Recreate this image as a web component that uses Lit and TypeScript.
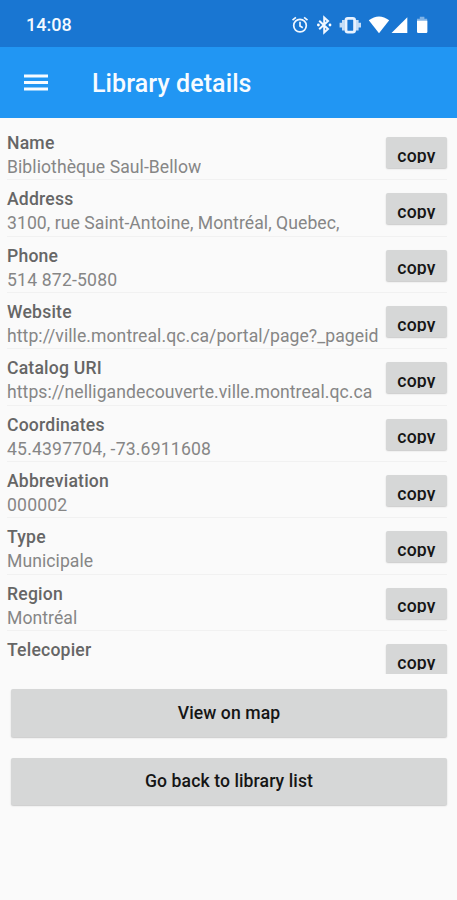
import { LitElement, html, css } from "lit";
import { customElement, property } from "lit/decorators.js";
import { classMap } from "lit/directives/class-map.js";

@customElement("status-bar")
class StatusBar extends LitElement {
  static styles = css`
    :host {
      display: flex;
      box-sizing: border-box;
      height: 47px;
      padding: 2px 0 0 26px;
      align-items: center;
      background: #1976d2;
      color: #f4f9ff;
    }
    .time {
      flex: 1;
      font-size: 18px;
      font-weight: 500;
    }
    svg {
      display: block;
      width: 167px;
      height: 24px;
      fill: #fff;
    }
    .line {
      fill: none;
      stroke: #f0f7ff;
    }
    .faint {
      opacity: 0.45;
    }
    .soft {
      opacity: 0.8;
    }
  `;
  render() {
    return html`<span class="time">14:08</span>
      <svg viewBox="290 12 167 24">
        <g class="line" stroke-width="1.7">
          <circle cx="300" cy="24.6" r="6.3" />
          <path d="M300 20.8v4.2l2.8 1.8M292.5 19.2l3.4-2.8M307.5 19.2l-3.4-2.8" />
        </g>
        <path class="line" stroke-width="2" d="M319.2 19.8l8.8 8.2-3.8 3.4V16.6l3.8 3.4-8.8 8.2" />
        <circle cx="318.4" cy="24" r="1.4" />
        <circle cx="330" cy="24" r="1.4" />
        <rect x="346" y="17.3" width="8.6" height="13.8" rx="1.8" fill="none" stroke="#e8f2ff" stroke-width="2.8" />
        <path class="line soft" stroke-width="2.8" d="M343.4 19v10.4M357.2 19v10.4M341 21.8v4.8M359.6 21.8v4.8" />
        <path d="M368.8 19.2q10.2-7.6 20.4 0L379 32.2z" />
        <path d="M407.3 16.2v15.8h-15.8z" />
        <path class="faint" d="M417 20v-2.2h2.8v-2h4.6v2h2.8V20z" />
        <path d="M417 19.8h10.4v11q0 1.2-1.2 1.2h-8q-1.2 0-1.2-1.2z" />
      </svg>`;
  }
}

@customElement("detail-row")
class DetailRow extends LitElement {
  @property() label = "";
  @property() value = "";
  static styles = css`
    :host {
      display: flex;
      flex: none;
      box-sizing: border-box;
      height: 56.35px;
      border-bottom: 1px solid #f1f1f1;
      justify-content: space-between;
      align-items: flex-start;
    }
    .text {
      padding-top: 9px;
      white-space: nowrap;
    }
    .label {
      font-size: 17.6px;
      line-height: 21px;
      font-weight: 500;
      letter-spacing: 0.2px;
      color: #666;
    }
    .value {
      margin-top: 3px;
      font-size: 17.6px;
      line-height: 21px;
      height: 19.5px;
      overflow: hidden;
      letter-spacing: 0.06px;
      color: #868686;
    }
    .value.numeric {
      letter-spacing: 0.18px;
    }
    .copy {
      box-sizing: border-box;
      width: 61px;
      height: 31px;
      margin: 13px 0 0;
      padding: 3px 0 0;
      border: 0;
      border-radius: 2px;
      background: #d6d7d7;
      box-shadow: 0 1px 1.5px #0003;
      color: #151515;
      font: 500 17.6px/21px Roboto, sans-serif;
      letter-spacing: 0.2px;
      text-align: center;
    }
    .clip {
      display: block;
      height: 17px;
      overflow: hidden;
    }
  `;
  render() {
    const numeric = /^[\d\s.,-]+$/.test(this.value);
    return html`<div class="text">
        <div class="label">${this.label}</div>
        <div class=${classMap({ value: true, numeric })}>${this.value}</div>
      </div>
      <button class="copy"><span class="clip">copy</span></button>`;
  }
}

const DETAILS = [
  ["Name", "Bibliothèque Saul-Bellow"],
  ["Address", "3100, rue Saint-Antoine, Montréal, Quebec,"],
  ["Phone", "514 872-5080"],
  ["Website", "http://ville.montreal.qc.ca/portal/page?_pageid"],
  ["Catalog URI", "https://nelligandecouverte.ville.montreal.qc.ca"],
  ["Coordinates", "45.4397704, -73.6911608"],
  ["Abbreviation", "000002"],
  ["Type", "Municipale"],
  ["Region", "Montréal"],
  ["Telecopier", ""],
];

@customElement("app-root")
class AppRoot extends LitElement {
  static styles = css`
    :host {
      display: flex;
      flex-direction: column;
      height: 900px;
      background: #fafafa;
      font-family: Roboto, sans-serif;
    }
    .bar {
      display: flex;
      align-items: center;
      box-sizing: border-box;
      height: 71px;
      padding-left: 24px;
      background: #2196f3;
      color: #f7fbff;
    }
    .bar svg {
      display: block;
      width: 24px;
      height: 18px;
      fill: #f7fbff;
    }
    .bar h1 {
      margin: 2px 0 0 44px;
      font-size: 25px;
      font-weight: 500;
      letter-spacing: 0.09px;
    }
    .list {
      display: flex;
      flex-direction: column;
      height: 550px;
      padding: 6px 10px 0 7px;
    }
    .list-wrap {
      height: 556px;
      overflow: hidden;
    }
    .actions {
      display: flex;
      flex-direction: column;
      gap: 21px;
      padding: 15px 10px 0 11px;
    }
    .action {
      height: 47.5px;
      padding: 0;
      border: 0;
      border-radius: 2px;
      background: #d6d7d7;
      box-shadow: 0 1px 1.5px #0003;
      color: #151515;
      font: 500 17.6px Roboto, sans-serif;
      letter-spacing: 0.09px;
    }
  `;
  render() {
    return html`<status-bar></status-bar>
      <header class="bar">
        <svg viewBox="0 0 24 18"><path d="M0 .5h24v3H0zM0 7h24v3H0zM0 13.5h24v3H0z" /></svg>
        <h1>Library details</h1>
      </header>
      <main class="list-wrap">
        <div class="list">
          ${DETAILS.map(([l, v]) => html`<detail-row .label=${l} .value=${v}></detail-row>`)}
        </div>
      </main>
      <div class="actions">
        <button class="action">View on map</button>
        <button class="action">Go back to library list</button>
      </div>`;
  }
}
